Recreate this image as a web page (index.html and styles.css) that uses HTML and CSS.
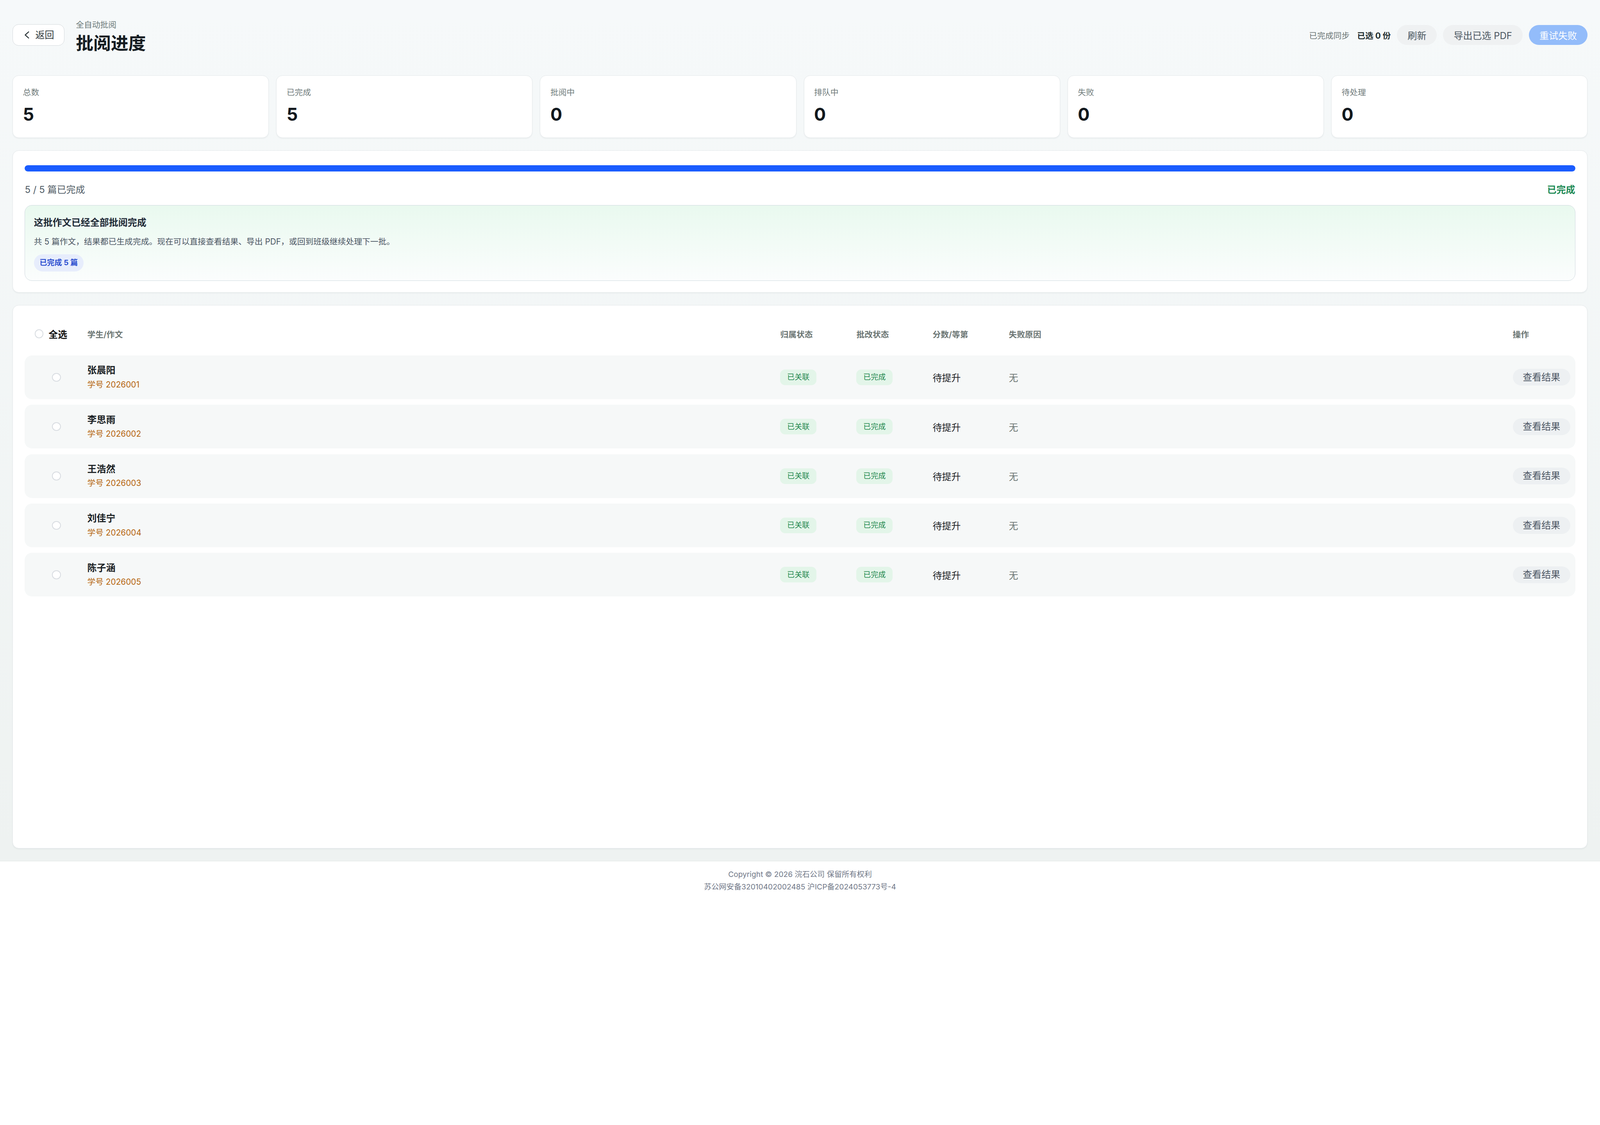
FILE: index.html
```
<!DOCTYPE html>
<html lang="zh-CN">
<head>
    <meta charset="UTF-8">
    <meta name="viewport" content="width=device-width, initial-scale=1.0">
    <title>批阅进度</title>
    <link rel="stylesheet" href="styles.css">
</head>
<body>
    <div class="page">
        <main class="main">
            <header class="topbar">
                <div class="topbar-left">
                    <button class="back-btn">
                        <svg class="back-icon" viewBox="0 0 12 12"><path d="M9 1L3.5 6L9 11"/></svg>
                        返回
                    </button>
                    <div class="title-block">
                        <div class="eyebrow">全自动批阅</div>
                        <h1 class="page-title">批阅进度</h1>
                    </div>
                </div>
                <div class="topbar-right">
                    <span class="sync-text">已完成同步</span>
                    <span class="selected-count">已选 0 份</span>
                    <button class="pill-btn">刷新</button>
                    <button class="pill-btn">导出已选 PDF</button>
                    <button class="pill-btn primary" disabled>重试失败</button>
                </div>
            </header>

            <section class="stats">
                <div class="stat-card"><div class="stat-label">总数</div><div class="stat-value">5</div></div>
                <div class="stat-card"><div class="stat-label">已完成</div><div class="stat-value">5</div></div>
                <div class="stat-card"><div class="stat-label">批阅中</div><div class="stat-value">0</div></div>
                <div class="stat-card"><div class="stat-label">排队中</div><div class="stat-value">0</div></div>
                <div class="stat-card"><div class="stat-label">失败</div><div class="stat-value">0</div></div>
                <div class="stat-card"><div class="stat-label">待处理</div><div class="stat-value">0</div></div>
            </section>

            <section class="card progress-card">
                <div class="progress-track">
                    <div class="progress-fill" style="width: 100%"></div>
                </div>
                <div class="progress-meta">
                    <span class="progress-count">5 / 5 篇已完成</span>
                    <span class="progress-state">已完成</span>
                </div>
                <div class="summary-box">
                    <div class="summary-title">这批作文已经全部批阅完成</div>
                    <div class="summary-desc">共 5 篇作文，结果都已生成完成。现在可以直接查看结果、导出 PDF，或回到班级继续处理下一批。</div>
                    <div><span class="summary-badge">已完成 5 篇</span></div>
                </div>
            </section>

            <section class="card table-card">
                <div class="table-head">
                    <label class="select-all"><span class="radio"></span>全选</label>
                    <div>学生/作文</div>
                    <div>归属状态</div>
                    <div>批改状态</div>
                    <div>分数/等第</div>
                    <div>失败原因</div>
                    <div>操作</div>
                </div>

                <div class="table-row">
                    <div class="cell-check"><span class="radio"></span></div>
                    <div class="student">
                        <div class="student-name">张晨阳</div>
                        <div class="student-id">学号 2026001</div>
                    </div>
                    <div><span class="tag">已关联</span></div>
                    <div><span class="tag">已完成</span></div>
                    <div class="score">待提升</div>
                    <div class="reason">无</div>
                    <div><button class="view-btn">查看结果</button></div>
                </div>

                <div class="table-row">
                    <div class="cell-check"><span class="radio"></span></div>
                    <div class="student">
                        <div class="student-name">李思雨</div>
                        <div class="student-id">学号 2026002</div>
                    </div>
                    <div><span class="tag">已关联</span></div>
                    <div><span class="tag">已完成</span></div>
                    <div class="score">待提升</div>
                    <div class="reason">无</div>
                    <div><button class="view-btn">查看结果</button></div>
                </div>

                <div class="table-row">
                    <div class="cell-check"><span class="radio"></span></div>
                    <div class="student">
                        <div class="student-name">王浩然</div>
                        <div class="student-id">学号 2026003</div>
                    </div>
                    <div><span class="tag">已关联</span></div>
                    <div><span class="tag">已完成</span></div>
                    <div class="score">待提升</div>
                    <div class="reason">无</div>
                    <div><button class="view-btn">查看结果</button></div>
                </div>

                <div class="table-row">
                    <div class="cell-check"><span class="radio"></span></div>
                    <div class="student">
                        <div class="student-name">刘佳宁</div>
                        <div class="student-id">学号 2026004</div>
                    </div>
                    <div><span class="tag">已关联</span></div>
                    <div><span class="tag">已完成</span></div>
                    <div class="score">待提升</div>
                    <div class="reason">无</div>
                    <div><button class="view-btn">查看结果</button></div>
                </div>

                <div class="table-row">
                    <div class="cell-check"><span class="radio"></span></div>
                    <div class="student">
                        <div class="student-name">陈子涵</div>
                        <div class="student-id">学号 2026005</div>
                    </div>
                    <div><span class="tag">已关联</span></div>
                    <div><span class="tag">已完成</span></div>
                    <div class="score">待提升</div>
                    <div class="reason">无</div>
                    <div><button class="view-btn">查看结果</button></div>
                </div>
            </section>
        </main>

        <footer class="footer">
            <div>Copyright © 2026 浣石公司 保留所有权利</div>
            <div>苏公网安备32010402002485 沪ICP备2024053773号-4</div>
        </footer>
    </div>
</body>
</html>
```

FILE: styles.css
```
body {
    margin: 0;
    font-family: Inter, "Noto Sans CJK SC", sans-serif;
    color: #1a2126;
    background: #fff;
}

button {
    font-family: inherit;
    cursor: pointer;
}

.page {
    display: flex;
    flex-direction: column;
    height: 2304px;
}

.main {
    flex: 1;
    display: flex;
    flex-direction: column;
    gap: 32px;
    padding: 32px;
    background: linear-gradient(180deg, #f6f9fa 0%, #eef2f1 100%);
}

/* top bar */
.topbar {
    height: 115px;
    margin-bottom: 14px;
    display: flex;
    align-items: center;
    justify-content: space-between;
}

.topbar-left {
    display: flex;
    align-items: center;
    gap: 29px;
}

.back-btn {
    display: flex;
    align-items: center;
    gap: 13px;
    padding: 9.6px 25.6px;
    line-height: 33.6px;
    font-size: 24px;
    color: #2b3538;
    background: #fff;
    border: 1.6px solid #d4d9dc;
    border-radius: 16px;
}

.back-icon {
    width: 19px;
    height: 19px;
    fill: none;
    stroke: #2b3538;
    stroke-width: 1.5;
    stroke-linecap: round;
    stroke-linejoin: round;
}

.title-block {
    padding-top: 10px;
}

.eyebrow {
    font-size: 20.8px;
    line-height: 29px;
    color: #6d7b7a;
}

.page-title {
    margin: 5px 0 0;
    font-size: 44.8px;
    line-height: 57.6px;
    font-weight: 700;
    color: #151c22;
}

.topbar-right {
    display: flex;
    align-items: center;
    gap: 16px;
}

.sync-text {
    font-size: 20.8px;
    color: #6b7575;
}

.selected-count {
    font-size: 20.8px;
    font-weight: 700;
    color: #1f2d2f;
    margin-left: 3px;
}

.pill-btn {
    height: 51px;
    padding: 0 27px;
    font-size: 24px;
    color: #4a5560;
    background: #eff1f2;
    border: none;
    border-radius: 999px;
}

.pill-btn.primary {
    background: #93bcfa;
    color: #fff;
    cursor: not-allowed;
}

/* stats */
.stats {
    display: grid;
    grid-template-columns: repeat(6, 1fr);
    gap: 19px;
}

.stat-card {
    height: 160px;
    box-sizing: border-box;
    padding: 30.4px 25.6px 0;
    background: #fff;
    border: 1.6px solid #e6eaec;
    border-radius: 16px;
    box-shadow: 0 1.6px 3.2px rgba(20, 40, 40, 0.05);
}

.stat-label {
    font-size: 20.8px;
    line-height: 25.6px;
    color: #707b7b;
}

.stat-value {
    margin-top: 16px;
    font-size: 44.8px;
    line-height: 54.4px;
    font-weight: 700;
    color: #12181d;
}

/* cards */
.card {
    background: #fff;
    border: 1.6px solid #e6eaec;
    border-radius: 16px;
    box-shadow: 0 1.6px 3.2px rgba(20, 40, 40, 0.05);
}

.progress-card {
    padding: 37px 30.4px 29px;
}

.progress-track {
    height: 16px;
    background: #e5e9ec;
    border-radius: 8px;
    overflow: hidden;
}

.progress-fill {
    height: 100%;
    background: #1a5cff;
    border-radius: 8px;
}

.progress-meta {
    display: flex;
    justify-content: space-between;
    margin-top: 29px;
    font-size: 24px;
    line-height: 35px;
}

.progress-count {
    color: #505c66;
}

.progress-state {
    color: #1e8a55;
    font-weight: 600;
}

.summary-box {
    margin-top: 22px;
    padding: 25.6px 22.4px 22.4px;
    border: 1.6px solid #cfd9df;
    border-radius: 19px;
    background: linear-gradient(180deg, #e9f9ef 0%, #fbfdfd 100%);
}

.summary-title {
    font-size: 24px;
    line-height: 35px;
    font-weight: 700;
    color: #1f2a37;
}

.summary-desc {
    margin-top: 16px;
    font-size: 20.8px;
    line-height: 32px;
    color: #4b5563;
}

.summary-badge {
    display: inline-block;
    margin-top: 16px;
    padding: 9.6px 14.4px;
    font-size: 19.2px;
    line-height: 25.6px;
    font-weight: 700;
    color: #2d4fd0;
    background: #e7edfc;
    border-radius: 999px;
}

/* table */
.table-card {
    flex: 1;
    padding: 32px 30.4px 30.4px;
    display: flex;
    flex-direction: column;
    gap: 14.4px;
}

.table-head,
.table-row {
    display: grid;
    grid-template-columns: 160px 11fr 195px 195px 195px 8fr 160px;
    align-items: center;
}

.table-head {
    height: 81.6px;
    font-size: 20.8px;
    font-weight: 600;
    color: #6b7573;
}

.select-all {
    display: flex;
    align-items: center;
    gap: 12.8px;
    padding-left: 25.6px;
    font-size: 24px;
    font-weight: 700;
    color: #111;
}

.radio {
    display: inline-block;
    width: 22.4px;
    height: 22.4px;
    box-sizing: border-box;
    border: 2.4px solid #d8dce1;
    border-radius: 50%;
    background: #fff;
}

.table-row {
    height: 112px;
    background: #f6f8f8;
    border-radius: 19px;
}

.cell-check {
    display: flex;
    padding-left: 70px;
}

.student-name {
    font-size: 24px;
    line-height: 32px;
    font-weight: 700;
    color: #1a1f24;
}

.student-id {
    margin-top: 6.4px;
    font-size: 20.8px;
    line-height: 28.8px;
    color: #b5650f;
}

.tag {
    display: inline-block;
    padding: 6.4px 17.6px;
    font-size: 19.2px;
    line-height: 27.2px;
    color: #23884e;
    background: #e3f5e9;
    border-radius: 12.8px;
}

.score {
    font-size: 24px;
    color: #1d2327;
}

.reason {
    font-size: 24px;
    color: #6b7573;
}

.view-btn {
    padding: 6.4px 25.6px;
    font-size: 24px;
    line-height: 30.4px;
    color: #4b5563;
    background: #edf0f2;
    border: none;
    border-radius: 999px;
}

/* footer */
.footer {
    padding: 17.6px 0;
    border-top: 1.6px solid #e3e8e7;
    text-align: center;
    font-size: 19.2px;
    line-height: 32px;
    color: #6f7787;
    background: #fff;
}
```
